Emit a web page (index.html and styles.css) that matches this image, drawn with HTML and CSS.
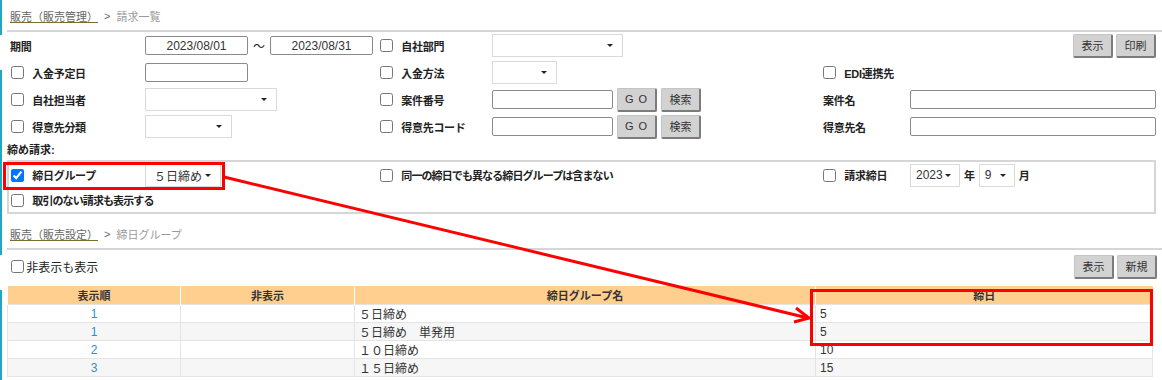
FILE: index.html
```html
<!DOCTYPE html>
<html lang="ja">
<head>
    <meta charset="UTF-8">
    <title>請求一覧</title>
    <link rel="stylesheet" href="styles.css">
</head>
<body>
<div class="page">

    <div class="crumb">
        <a class="crumb-link">販売（販売管理）</a>
        <span class="crumb-sep">&gt;</span>
        <span class="crumb-here">請求一覧</span>
    </div>

    <div class="row">
        <div class="first"><span class="lbl">期間</span></div>
        <div class="period">
            <input class="txt date" type="text" value="2023/08/01">
            <span class="tilde">～</span>
            <input class="txt date" type="text" value="2023/08/31">
        </div>
        <label class="chk"><input type="checkbox">自社部門</label>
        <div><span class="sel w130"><span></span><i class="caret"></i></span></div>
        <div></div>
        <div class="right">
            <button class="btn">表示</button>
            <button class="btn">印刷</button>
        </div>
    </div>

    <div class="row">
        <label class="chk first-chk"><input type="checkbox">入金予定日</label>
        <div><input class="txt w103" type="text"></div>
        <label class="chk"><input type="checkbox">入金方法</label>
        <div><span class="sel w65"><span></span><i class="caret"></i></span></div>
        <label class="chk span2"><input type="checkbox">EDI連携先</label>
    </div>

    <div class="row">
        <label class="chk first-chk"><input type="checkbox">自社担当者</label>
        <div><span class="sel w132"><span></span><i class="caret"></i></span></div>
        <label class="chk"><input type="checkbox">案件番号</label>
        <div class="inline">
            <input class="txt w121" type="text">
            <button class="btn go">G O</button>
            <button class="btn">検索</button>
        </div>
        <div><span class="lbl">案件名</span></div>
        <div class="right"><input class="txt wide" type="text"></div>
    </div>

    <div class="row">
        <label class="chk first-chk"><input type="checkbox">得意先分類</label>
        <div><span class="sel w87"><span></span><i class="caret"></i></span></div>
        <label class="chk"><input type="checkbox">得意先コード</label>
        <div class="inline">
            <input class="txt w121" type="text">
            <button class="btn go">G O</button>
            <button class="btn">検索</button>
        </div>
        <div><span class="lbl">得意先名</span></div>
        <div class="right"><input class="txt wide" type="text"></div>
    </div>

    <div class="group-title">締め請求:</div>

    <div class="group">
        <div class="row in tall">
            <label class="chk first-chk"><input type="checkbox" checked>締日グループ</label>
            <div><span class="sel w75 pad"><span>５日締め</span><i class="caret"></i></span></div>
            <label class="chk span2 kana"><input type="checkbox">同一の締日でも異なる締日グループは含まない</label>
            <label class="chk"><input type="checkbox">請求締日</label>
            <div class="inline">
                <span class="sel w50 pad-s"><span>2023</span><i class="caret"></i></span>
                <span class="lbl">年</span>
                <span class="sel w36 pad-s"><span>9</span><i class="caret"></i></span>
                <span class="lbl">月</span>
            </div>
        </div>
        <div class="row in short">
            <label class="chk first-chk span3 kana"><input type="checkbox">取引のない請求も表示する</label>
        </div>
    </div>

    <div class="crumb crumb2">
        <a class="crumb-link">販売（販売設定）</a>
        <span class="crumb-sep">&gt;</span>
        <span class="crumb-here">締日グループ</span>
    </div>

    <div class="toolbar">
        <label class="plain"><input type="checkbox">非表示も表示</label>
        <div class="right">
            <button class="btn">表示</button>
            <button class="btn">新規</button>
        </div>
    </div>

    <table class="list">
        <thead>
            <tr>
                <th class="c-order">表示順</th>
                <th class="c-hide">非表示</th>
                <th class="c-name">締日グループ名</th>
                <th>締日</th>
            </tr>
        </thead>
        <tbody>
            <tr><td class="num">1</td><td></td><td>５日締め</td><td>5</td></tr>
            <tr><td class="num">1</td><td></td><td>５日締め　単発用</td><td>5</td></tr>
            <tr><td class="num">2</td><td></td><td>１０日締め</td><td>10</td></tr>
            <tr><td class="num">3</td><td></td><td>１５日締め</td><td>15</td></tr>
        </tbody>
    </table>

    <!-- annotation drawn over the screen -->
    <svg class="marks" width="1162" height="380" viewBox="0 0 1162 380">
        <rect x="4.5" y="163.5" width="219" height="25" fill="none" stroke="#f00" stroke-width="3"/>
        <rect x="811.5" y="290.5" width="340" height="54" fill="none" stroke="#f00" stroke-width="3"/>
        <line x1="224" y1="177" x2="808" y2="318" stroke="#f00" stroke-width="3"/>
        <polyline points="796,308 809,318 794,322" fill="none" stroke="#f00" stroke-width="3"/>
    </svg>

</div>
</body>
</html>
```

FILE: styles.css
```css
body {
    margin: 0;
    font-family: "Liberation Sans", "Noto Sans CJK JP", sans-serif;
    font-size: 11px;
    color: #222;
}

.page {
    position: relative;
    width: 1162px;
    height: 380px;
    overflow: hidden;
    background-color: #fff;
    background-image: linear-gradient(#20a8bf 0 35px, transparent 35px 70px, #20a8bf 70px 255px, transparent 255px 290px, #20a8bf 290px);
    background-size: 2px 100%;
    background-repeat: no-repeat;
}

.crumb {
    height: 32px;
    margin-left: 7px;
    padding: 2px 0 0 3px;
    box-sizing: border-box;
    display: flex;
    align-items: center;
    gap: 6px;
    border-bottom: 2px solid #d6d6d6;
}
.crumb2 {
    height: 36px;
    padding-top: 6px;
}
.crumb-link {
    color: #666;
    text-decoration: underline;
    text-decoration-color: #7a6c2c;
}
.crumb-sep {
    color: #666;
}
.crumb-here {
    color: #9a9a9a;
}

.row {
    display: grid;
    grid-template-columns: 145px 235px 112px 331px 87px 1fr;
    height: 27px;
    align-items: center;
}
.row > div {
    display: flex;
    align-items: center;
}
.row .first {
    padding-left: 10px;
}
.row .first-chk {
    padding-left: 11px;
}
.row .span2 {
    grid-column: span 2;
}
.row .span3 {
    grid-column: span 3;
}
.row .right {
    justify-content: flex-end;
    padding-right: 6px;
    gap: 3px;
}
.inline {
    gap: 4px;
}

.lbl {
    font-weight: bold;
    letter-spacing: -0.3px;
}

.chk {
    display: flex;
    align-items: center;
    gap: 8px;
    font-weight: bold;
    letter-spacing: -0.3px;
}
.chk.kana {
    letter-spacing: -0.9px;
}
input[type="checkbox"] {
    margin: 0 0.3px 0 0;
    width: 13px;
    height: 13px;
}

.txt {
    height: 19px;
    box-sizing: border-box;
    border: 1px solid #8a8a8a;
    border-radius: 2px;
    padding: 0 4px;
    font: inherit;
    font-size: 12px;
    color: #333;
}
.date {
    width: 103px;
    text-align: center;
}
.tilde {
    width: 22px;
    text-align: center;
    font-size: 12px;
}
.w103 { width: 103px; }
.w121 { width: 121px; }
.wide { width: 246px; }

.sel {
    height: 23px;
    box-sizing: border-box;
    border: 1px solid #dadada;
    background: #fff;
    display: flex;
    align-items: center;
    justify-content: space-between;
    padding: 0 9px 0 8px;
    color: #333;
    font-size: 12px;
}
.sel.pad-s {
    padding-left: 5px;
    padding-right: 8px;
}
.w130 { width: 131px; }
.w65 { width: 65px; }
.w132 { width: 132px; }
.w87 { width: 87px; }
.w75 { width: 76px; }
.w50 { width: 50px; }
.w36 { width: 36px; }

.caret {
    width: 0;
    height: 0;
    border-left: 3px solid transparent;
    border-right: 3px solid transparent;
    border-top: 3px solid #222;
}

.btn {
    width: 40px;
    height: 24px;
    box-sizing: border-box;
    padding: 0;
    background: #d2d2d2;
    border: 1px solid #c4c4c4;
    border-right: 2px solid #7c7c7c;
    border-bottom: 2px solid #7c7c7c;
    border-radius: 2px;
    font: inherit;
    color: #333;
}
.go {
    letter-spacing: 1px;
}

.group-title {
    height: 20px;
    line-height: 20px;
    padding-left: 7px;
    font-weight: bold;
}

.group {
    margin: 0 6px 0 7px;
    border: 2px solid #d6d6d6;
}
.group .row {
    grid-template-columns: 136px 235px 112px 331px 87px 1fr;
}
.group .first-chk {
    padding-left: 2px;
}
.group .tall {
    height: 26px;
}
.group .short {
    height: 24px;
}

.toolbar {
    height: 29px;
    display: flex;
    align-items: center;
    justify-content: space-between;
    padding: 2px 5px 0 11px;
}
.toolbar .right {
    display: flex;
    gap: 3px;
}
.plain {
    display: flex;
    align-items: center;
    gap: 2px;
    font-size: 12px;
}

.list {
    margin: 5px 0 0 7px;
    width: 1146px;
    border-collapse: collapse;
    table-layout: fixed;
}
.list th {
    height: 18px;
    padding: 0;
    background: #ffcf8f;
    border-left: 1px solid #fff;
    font-weight: bold;
    color: #333;
    text-align: center;
}
.list td {
    box-sizing: border-box;
    height: 18px;
    padding: 0 4px;
    border: 1px solid #e4e4e4;
    color: #333;
    font-size: 12px;
}
.list tbody tr:nth-child(even) {
    background: #f6f6f6;
}
.list .num {
    text-align: center;
    color: #2f8fcb;
}
.c-order { width: 172px; }
.c-hide { width: 173px; }
.c-name { width: 460px; }

.marks {
    position: absolute;
    left: 0;
    top: 0;
    pointer-events: none;
}
```
